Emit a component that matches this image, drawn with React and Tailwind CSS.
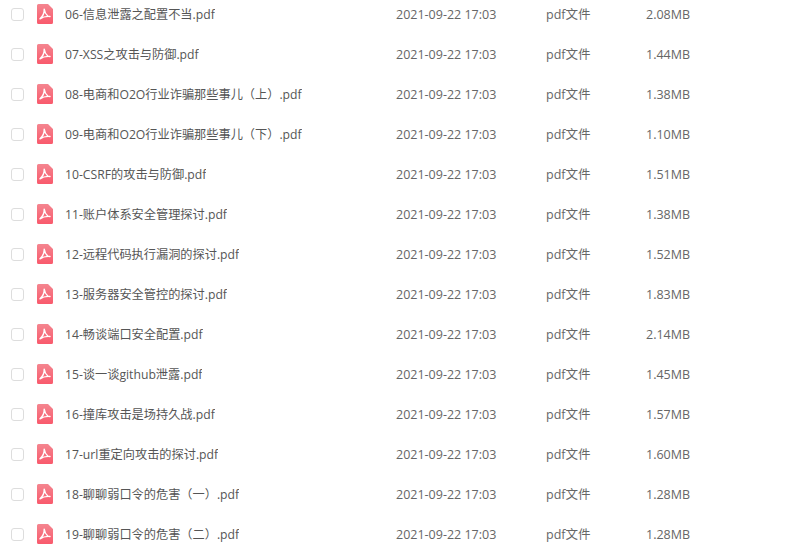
const files = [
  { name: "06-信息泄露之配置不当.pdf", size: "2.08MB" },
  { name: "07-XSS之攻击与防御.pdf", size: "1.44MB" },
  { name: "08-电商和O2O行业诈骗那些事儿（上）.pdf", size: "1.38MB" },
  { name: "09-电商和O2O行业诈骗那些事儿（下）.pdf", size: "1.10MB" },
  { name: "10-CSRF的攻击与防御.pdf", size: "1.51MB" },
  { name: "11-账户体系安全管理探讨.pdf", size: "1.38MB" },
  { name: "12-远程代码执行漏洞的探讨.pdf", size: "1.52MB" },
  { name: "13-服务器安全管控的探讨.pdf", size: "1.83MB" },
  { name: "14-畅谈端口安全配置.pdf", size: "2.14MB" },
  { name: "15-谈一谈github泄露.pdf", size: "1.45MB" },
  { name: "16-撞库攻击是场持久战.pdf", size: "1.57MB" },
  { name: "17-url重定向攻击的探讨.pdf", size: "1.60MB" },
  { name: "18-聊聊弱口令的危害（一）.pdf", size: "1.28MB" },
  { name: "19-聊聊弱口令的危害（二）.pdf", size: "1.28MB" },
]

function PdfIcon() {
  return (
    <svg width="16" height="20" viewBox="0 0 16 20" className="shrink-0">
      <defs>
        <linearGradient id="pdfFill" x1="0" y1="0" x2="0" y2="1">
          <stop offset="0" stopColor="#f4858f" />
          <stop offset="1" stopColor="#f9596c" />
        </linearGradient>
      </defs>
      <path d="M1.5 0H11l5 5v13.5a1.5 1.5 0 0 1-1.5 1.5h-13A1.5 1.5 0 0 1 0 18.5v-17A1.5 1.5 0 0 1 1.5 0Z" fill="url(#pdfFill)" />
      {/* acrobat mark */}
      <path d="M7.2 5.2c.4 2.8 1.8 5.4 3.4 6.6M7.2 5.2c.2 3-1.1 6.6-4.2 9.6M3 14.8c2.2-1.5 5.4-2.7 10-2.3" fill="none" stroke="#fff" strokeWidth="1.4" strokeLinecap="round" />
    </svg>
  )
}

function FileRow({ file }) {
  return (
    <div className="flex h-10 items-center text-[12.5px] text-[#666]">
      <div className="ml-[11px] h-[13px] w-[13px] shrink-0 rounded-[3px] border border-[#ddd] bg-white" />
      <div className="ml-[13px] w-[359px] shrink-0 flex items-center">
        <PdfIcon />
        <span className="ml-[12px] truncate pt-[2px] text-[12.2px] text-[#555]">{file.name}</span>
      </div>
      <span className="w-[150px] shrink-0 pt-[2px]">2021-09-22 17:03</span>
      <span className="w-[100px] shrink-0 pt-[2px]">pdf文件</span>
      <span className="pt-[2px]">{file.size}</span>
    </div>
  )
}

export default function App() {
  return (
    <div
      className="h-[556px] w-[806px] overflow-hidden bg-white"
      style={{ fontFamily: '"Open Sans", "Noto Sans CJK SC", sans-serif' }}
    >
      <div className="-mt-[6px]">
        {files.map((file) => (
          <FileRow key={file.name} file={file} />
        ))}
      </div>
    </div>
  )
}
